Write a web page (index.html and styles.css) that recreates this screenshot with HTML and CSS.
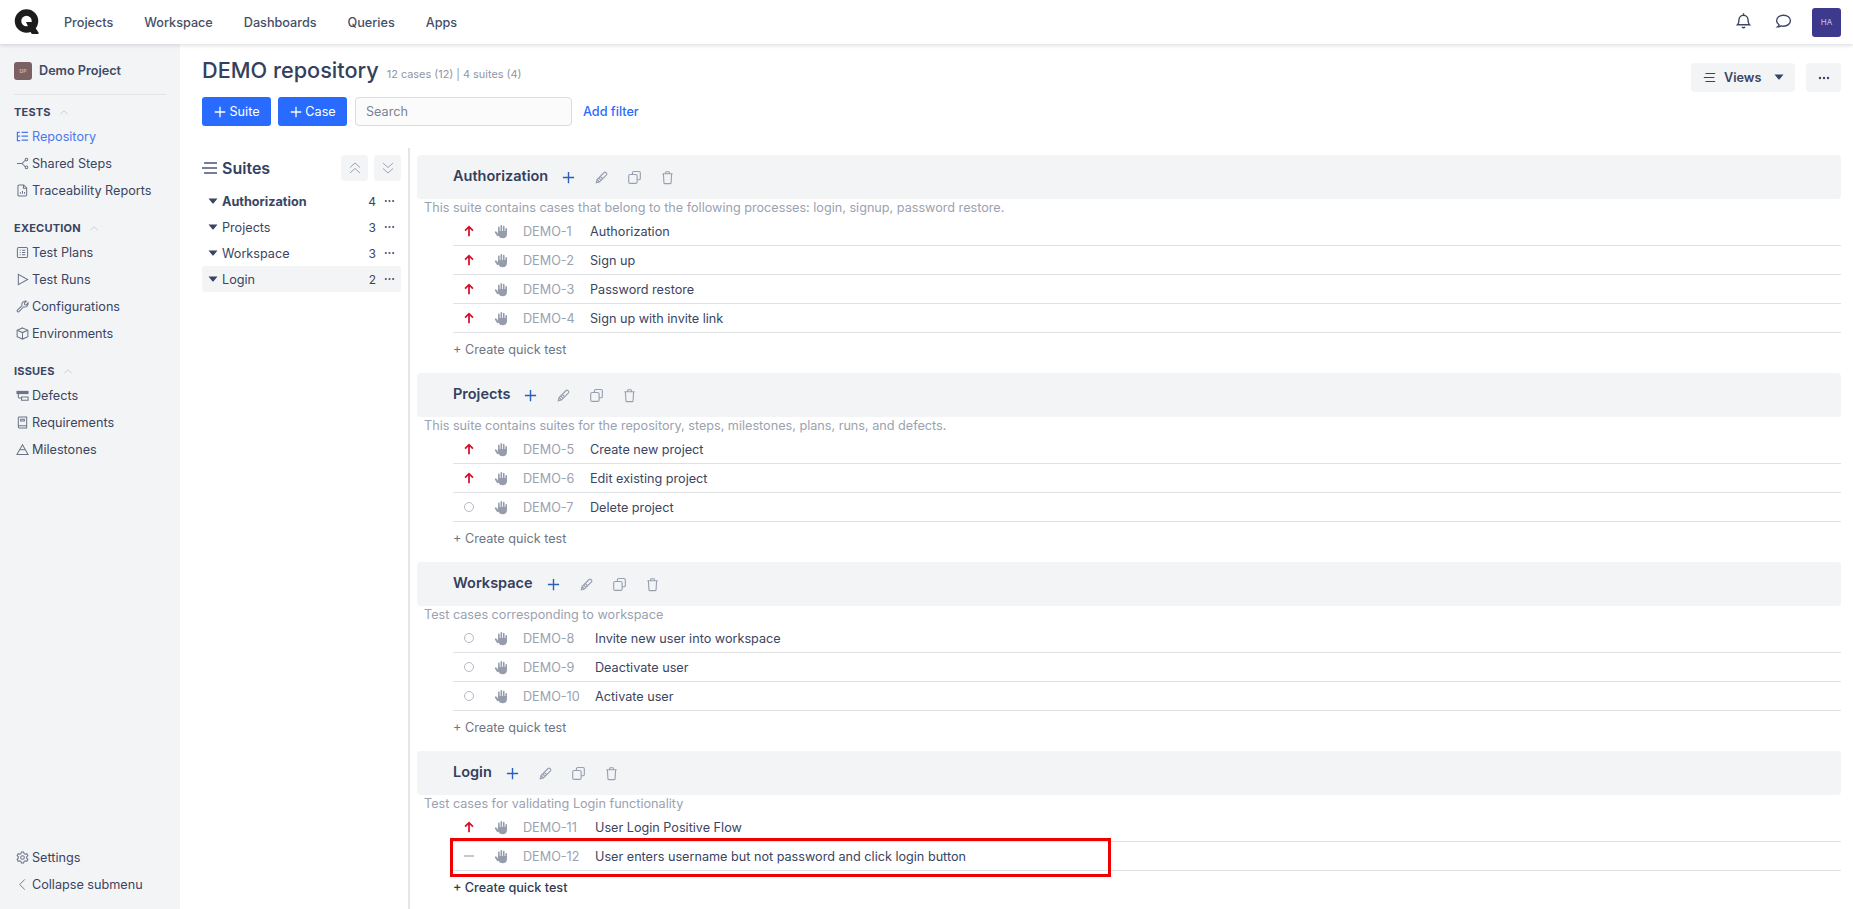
FILE: index.html
```html
<!DOCTYPE html>
<html lang="en">
<head>
    <meta charset="UTF-8">
    <title>DEMO repository</title>
    <link rel="stylesheet" href="styles.css">
</head>
<body>
    <svg class="sprites" xmlns="http://www.w3.org/2000/svg">
        <symbol id="i-hand" viewBox="0 0 16 16"><g fill="none" stroke="currentColor" stroke-linecap="round"><path stroke-width="1.700" d="M5.200 8V3.600M7.800 8V1.900M10.400 8V2.800M13 9V5.200"/><path stroke-width="2" d="M1.900 8.800 4 12"/></g><path fill="currentColor" d="M4.300 7.500h9.500v3.300c0 2.600-1.900 4.300-4.500 4.300-2.200 0-3.500-.9-4.500-2.700l-1-1.800z"/></symbol>
        <symbol id="i-up" viewBox="0 0 16 16"><path fill="none" stroke="currentColor" stroke-width="2" d="M8 14V3M3.500 7.500 8 3l4.500 4.500"/></symbol>
        <symbol id="i-plus" viewBox="0 0 16 16"><path fill="none" stroke="currentColor" stroke-width="1.500" d="M8 2v12M2 8h12"/></symbol>
        <symbol id="i-pencil" viewBox="0 0 16 16"><path fill="none" stroke="currentColor" stroke-width="1.300" d="M2.500 13.500l.8-3.300L10.800 2.700c.5-.5 1.300-.5 1.800 0l.7.7c.5.5.5 1.300 0 1.800l-7.500 7.500zM3.300 10.200l2.500 2.500M5 8.500l2.500 2.500M6.700 6.800l2.500 2.500"/></symbol>
        <symbol id="i-copy" viewBox="0 0 16 16"><g fill="none" stroke="currentColor" stroke-width="1.200"><rect x="1.800" y="4.800" width="9" height="9.500" rx="1.500"/><path d="M5.800 4.500V3c0-.8.600-1.400 1.400-1.400h5.600c.8 0 1.400.6 1.400 1.400v6c0 .8-.6 1.400-1.400 1.400h-2"/></g></symbol>
        <symbol id="i-trash" viewBox="0 0 16 16"><g fill="none" stroke="currentColor" stroke-width="1.200"><path d="M2.500 4h11M6 4V2.600c0-.4.300-.7.700-.7h2.600c.4 0 .7.300.7.700V4M3.600 4l.6 9.500c0 .6.500 1 1.100 1h5.400c.6 0 1.100-.4 1.100-1l.6-9.500"/></g></symbol>
        <symbol id="i-dots" viewBox="0 0 12 4"><circle cx="2" cy="2" r="1.200" fill="currentColor"/><circle cx="6" cy="2" r="1.200" fill="currentColor"/><circle cx="10" cy="2" r="1.200" fill="currentColor"/></symbol>
        <symbol id="i-caret" viewBox="0 0 10 6"><path fill="currentColor" d="M.5.500h9L5.600 5.200c-.3.400-.9.400-1.200 0z"/></symbol>
        <symbol id="i-chev" viewBox="0 0 12 7"><path fill="none" stroke="currentColor" stroke-width="1" d="M1.500 5.500 6 1.500l4.500 4"/></symbol>
    </svg>

    <header class="topbar">
        <svg class="logo" viewBox="0 0 26 26"><circle cx="12.500" cy="12" r="8.500" fill="none" stroke="#1c1c1c" stroke-width="6.500"/><path d="M12 13h5.500l7 10.500c.4.800 0 1.500-.8 1.500h-5c-.7 0-1.100-.2-1.500-.8z" fill="#1c1c1c"/></svg>
        <nav class="topnav">
            <a>Projects</a>
            <a>Workspace</a>
            <a>Dashboards</a>
            <a>Queries</a>
            <a>Apps</a>
        </nav>
        <div class="topbar-right">
            <svg class="top-icon" viewBox="0 0 16 16"><path fill="none" stroke="currentColor" stroke-width="1.300" d="M2.300 12c1-1 1.400-2.200 1.400-4.200C3.700 5 5.500 3 8 3s4.300 2 4.300 4.800c0 2 .4 3.200 1.400 4.200zM8 1.200V3M6.500 14.200c.8.700 2.200.7 3 0"/></svg>
            <svg class="top-icon" viewBox="0 0 16 16"><path fill="none" stroke="currentColor" stroke-width="1.300" d="M2.400 14c.8-.5 1.300-1.200 1.400-2C2.400 11 1.500 9.700 1.500 8.200 1.500 5.300 4.400 3 8 3s6.500 2.300 6.500 5.200-2.900 5.200-6.500 5.200c-.8 0-1.500-.1-2.200-.3-.9.700-2.100 1-3.400.9z"/></svg>
            <div class="avatar">HA</div>
        </div>
    </header>

    <div class="shell">
        <aside class="sidebar">
            <div class="project">
                <span class="project-badge">DP</span>
                <span>Demo Project</span>
            </div>
            <div class="side-group first">TESTS <svg class="chev"><use href="#i-chev"/></svg></div>
            <a class="side-item active">
                <svg viewBox="0 0 14 14"><path fill="none" stroke="currentColor" stroke-width="1.300" d="M1.500 2v9.500h3M1.500 6.500h3M6 2.500h7M6 6.500h7M6 11h7M1 2.500h3"/></svg>
                Repository
            </a>
            <a class="side-item">
                <svg viewBox="0 0 14 14"><g fill="none" stroke="currentColor" stroke-width="1.100"><path d="M1 7h5.500l3.500-3.500M6.500 7l3.500 3.500"/><circle cx="11.300" cy="2.800" r="1.400"/><circle cx="11.300" cy="11.200" r="1.400"/></g></svg>
                Shared Steps
            </a>
            <a class="side-item">
                <svg viewBox="0 0 14 14"><g fill="none" stroke="currentColor" stroke-width="1.100"><path d="M3.300 1h5l3.200 3.200v7.500c0 .7-.5 1.300-1.200 1.300H3.300c-.7 0-1.200-.6-1.200-1.300V2.300C2.100 1.600 2.600 1 3.300 1z"/><path d="M8 1v3.500h3.500M4.800 10.500V9M7 10.500V7.500M9.200 10.500V8.500"/></g></svg>
                Traceability Reports
            </a>

            <div class="side-group">EXECUTION <svg class="chev"><use href="#i-chev"/></svg></div>
            <a class="side-item">
                <svg viewBox="0 0 14 14"><g fill="none" stroke="currentColor" stroke-width="1.100"><rect x="1.500" y="1.500" width="11" height="11" rx="1.500"/><path d="M4 4.500h1M6.500 4.500H10M4 7h1M6.500 7H10M4 9.500h1M6.500 9.500H10"/></g></svg>
                Test Plans
            </a>
            <a class="side-item">
                <svg viewBox="0 0 14 14"><path fill="none" stroke="currentColor" stroke-width="1.100" d="M2.500 1.500v11L12.500 7z"/></svg>
                Test Runs
            </a>
            <a class="side-item">
                <svg viewBox="0 0 14 14"><path fill="none" stroke="currentColor" stroke-width="1.100" d="M1.300 11.200 6.500 6c-.6-2 .2-4.600 3.500-5 .5 0 .9 0 1.200.2L9 3.500l.3 1.500 1.500.4L13 3c.3 2.800-1.800 5-5 4.500l-5 5.200c-.9.600-2.300-.6-1.700-1.500z"/></svg>
                Configurations
            </a>
            <a class="side-item">
                <svg viewBox="0 0 14 14"><g fill="none" stroke="currentColor" stroke-width="1.100"><path d="M7 1 12.800 3.500v7L7 13 1.200 10.500v-7z"/><path d="M1.200 3.500 7 6l5.800-2.500M7 6v7"/></g></svg>
                Environments
            </a>

            <div class="side-group">ISSUES <svg class="chev"><use href="#i-chev"/></svg></div>
            <a class="side-item">
                <svg viewBox="0 0 14 14"><path fill="currentColor" d="M.5 2h13v3.500h-13z"/><path fill="none" stroke="currentColor" stroke-width="1.100" d="M2.500 5.500v3c0 .8.500 1.300 1.200 1.300H6M6 8.500h7v3.500H6z"/></svg>
                Defects
            </a>
            <a class="side-item">
                <svg viewBox="0 0 14 14"><g fill="none" stroke="currentColor" stroke-width="1.100"><path d="M2.500 11V2c0-.6.400-1 1-1h8v9.500h-8c-.6 0-1 .5-1 1.100S3 13 3.500 13h8v-2.500"/><path d="M5 3.500h4v2H5z"/></g></svg>
                Requirements
            </a>
            <a class="side-item">
                <svg viewBox="0 0 14 14"><path fill="none" stroke="currentColor" stroke-width="1.100" d="M7 2 13 12.500H1zM4.700 7.500c1.500-.8 3-.8 4.600 0"/></svg>
                Milestones
            </a>

            <div class="side-spacer"></div>
            <a class="side-item">
                <svg viewBox="0 0 14 14"><g fill="none" stroke="currentColor" stroke-width="1.100"><path d="M5.800 1h2.400l.4 1.700 1.300.7 1.700-.5 1.200 2.100-1.300 1.200v1.600l1.300 1.200-1.200 2.100-1.700-.5-1.300.7L8.200 13H5.800l-.4-1.700-1.300-.7-1.700.5-1.200-2.100 1.300-1.200V6.200L1.200 5l1.200-2.100 1.700.5 1.300-.7z"/><circle cx="7" cy="7" r="2"/></g></svg>
                Settings
            </a>
            <a class="side-item">
                <svg viewBox="0 0 14 14"><path fill="none" stroke="currentColor" stroke-width="1" d="M9.500 1.500 4 7l5.500 5.500"/></svg>
                Collapse submenu
            </a>
        </aside>

        <main class="content">
            <div class="page-head">
                <div>
                    <div class="title-line">
                        <h1>DEMO repository</h1>
                        <span class="stats">12 cases (12) | 4 suites (4)</span>
                    </div>
                    <div class="toolbar">
                        <button class="btn-primary"><svg><use href="#i-plus"/></svg>Suite</button>
                        <button class="btn-primary"><svg><use href="#i-plus"/></svg>Case</button>
                        <div class="search">Search</div>
                        <a class="add-filter">Add filter</a>
                    </div>
                </div>
                <div class="head-actions">
                    <button class="btn-soft views">
                        <svg class="lines" viewBox="0 0 16 12"><path fill="none" stroke="currentColor" stroke-width="1.300" d="M3 1h12M1 6h13M3 11h12"/></svg>
                        Views
                        <svg class="views-caret"><use href="#i-caret"/></svg>
                    </button>
                    <button class="btn-soft more"><svg><use href="#i-dots"/></svg></button>
                </div>
            </div>

            <div class="columns">
                <section class="tree">
                    <div class="tree-head">
                        <svg class="lines-big" viewBox="0 0 16 12"><path fill="none" stroke="currentColor" stroke-width="1.400" d="M2 1h13M0 6h15M2 11h13"/></svg>
                        <h2>Suites</h2>
                        <button class="tree-btn"><svg viewBox="0 0 12 12"><path fill="none" stroke="currentColor" stroke-width="1" d="M1 5.500 6 1l5 4.500M1 11l5-4.500 5 4.500"/></svg></button>
                        <button class="tree-btn"><svg viewBox="0 0 12 12"><path fill="none" stroke="currentColor" stroke-width="1" d="M1 1l5 4.500L11 1M1 6.500 6 11l5-4.500"/></svg></button>
                    </div>
                    <div class="tree-row strong"><svg class="tree-caret"><use href="#i-caret"/></svg><span>Authorization</span><b>4</b><svg class="tree-dots"><use href="#i-dots"/></svg></div>
                    <div class="tree-row"><svg class="tree-caret"><use href="#i-caret"/></svg><span>Projects</span><b>3</b><svg class="tree-dots"><use href="#i-dots"/></svg></div>
                    <div class="tree-row"><svg class="tree-caret"><use href="#i-caret"/></svg><span>Workspace</span><b>3</b><svg class="tree-dots"><use href="#i-dots"/></svg></div>
                    <div class="tree-row current"><svg class="tree-caret"><use href="#i-caret"/></svg><span>Login</span><b>2</b><svg class="tree-dots"><use href="#i-dots"/></svg></div>
                </section>

                <section class="suites">
                    <div class="suite">
                        <div class="suite-head">
                            <h3>Authorization</h3>
                            <svg class="act plus"><use href="#i-plus"/></svg>
                            <svg class="act"><use href="#i-pencil"/></svg>
                            <svg class="act"><use href="#i-copy"/></svg>
                            <svg class="act"><use href="#i-trash"/></svg>
                        </div>
                        <p class="suite-desc">This suite contains cases that belong to the following processes: login, signup, password restore.</p>
                        <div class="case"><svg class="prio"><use href="#i-up"/></svg><svg class="hand"><use href="#i-hand"/></svg><span class="case-id">DEMO-1</span><span>Authorization</span></div>
                        <div class="case"><svg class="prio"><use href="#i-up"/></svg><svg class="hand"><use href="#i-hand"/></svg><span class="case-id">DEMO-2</span><span>Sign up</span></div>
                        <div class="case"><svg class="prio"><use href="#i-up"/></svg><svg class="hand"><use href="#i-hand"/></svg><span class="case-id">DEMO-3</span><span>Password restore</span></div>
                        <div class="case"><svg class="prio"><use href="#i-up"/></svg><svg class="hand"><use href="#i-hand"/></svg><span class="case-id">DEMO-4</span><span>Sign up with invite link</span></div>
                        <a class="quick">+ Create quick test</a>
                    </div>

                    <div class="suite">
                        <div class="suite-head">
                            <h3>Projects</h3>
                            <svg class="act plus"><use href="#i-plus"/></svg>
                            <svg class="act"><use href="#i-pencil"/></svg>
                            <svg class="act"><use href="#i-copy"/></svg>
                            <svg class="act"><use href="#i-trash"/></svg>
                        </div>
                        <p class="suite-desc">This suite contains suites for the repository, steps, milestones, plans, runs, and defects.</p>
                        <div class="case"><svg class="prio"><use href="#i-up"/></svg><svg class="hand"><use href="#i-hand"/></svg><span class="case-id">DEMO-5</span><span>Create new project</span></div>
                        <div class="case"><svg class="prio"><use href="#i-up"/></svg><svg class="hand"><use href="#i-hand"/></svg><span class="case-id">DEMO-6</span><span>Edit existing project</span></div>
                        <div class="case"><span class="prio ring"></span><svg class="hand"><use href="#i-hand"/></svg><span class="case-id">DEMO-7</span><span>Delete project</span></div>
                        <a class="quick">+ Create quick test</a>
                    </div>

                    <div class="suite wide-ids">
                        <div class="suite-head">
                            <h3>Workspace</h3>
                            <svg class="act plus"><use href="#i-plus"/></svg>
                            <svg class="act"><use href="#i-pencil"/></svg>
                            <svg class="act"><use href="#i-copy"/></svg>
                            <svg class="act"><use href="#i-trash"/></svg>
                        </div>
                        <p class="suite-desc">Test cases corresponding to workspace</p>
                        <div class="case"><span class="prio ring"></span><svg class="hand"><use href="#i-hand"/></svg><span class="case-id">DEMO-8</span><span>Invite new user into workspace</span></div>
                        <div class="case"><span class="prio ring"></span><svg class="hand"><use href="#i-hand"/></svg><span class="case-id">DEMO-9</span><span>Deactivate user</span></div>
                        <div class="case"><span class="prio ring"></span><svg class="hand"><use href="#i-hand"/></svg><span class="case-id">DEMO-10</span><span>Activate user</span></div>
                        <a class="quick">+ Create quick test</a>
                    </div>

                    <div class="suite wide-ids">
                        <div class="suite-head">
                            <h3>Login</h3>
                            <svg class="act plus"><use href="#i-plus"/></svg>
                            <svg class="act"><use href="#i-pencil"/></svg>
                            <svg class="act"><use href="#i-copy"/></svg>
                            <svg class="act"><use href="#i-trash"/></svg>
                        </div>
                        <p class="suite-desc">Test cases for validating Login functionality</p>
                        <div class="case"><svg class="prio"><use href="#i-up"/></svg><svg class="hand"><use href="#i-hand"/></svg><span class="case-id">DEMO-11</span><span>User Login Positive Flow</span></div>
                        <div class="case"><span class="prio dash"></span><svg class="hand"><use href="#i-hand"/></svg><span class="case-id">DEMO-12</span><span>User enters username but not password and click login button</span></div>
                        <a class="quick dark">+ Create quick test</a>
                    </div>
                </section>
            </div>
        </main>
    </div>

    <div class="highlight"></div>
</body>
</html>
```

FILE: styles.css
```css
* {
    box-sizing: border-box;
}
html, body {
    height: 100%;
}
body {
    margin: 0;
    font-family: Inter, "Noto Sans", sans-serif;
    font-size: 12.65px;
    color: #2f3b57;
    background-color: white;
    overflow: hidden;
}
svg {
    display: block;
    flex-shrink: 0;
}
button {
    font-family: inherit;
    border: none;
    cursor: pointer;
}
.sprites {
    display: none;
}
.topbar {
    position: relative;
    z-index: 2;
    height: 44px;
    display: flex;
    align-items: center;
    padding: 0 12px 0 14px;
    background-color: white;
    box-shadow: 0 1px 4px rgba(30, 40, 60, 0.18);
}
.logo {
    width: 26px;
    height: 26px;
}
.topnav {
    display: flex;
    gap: 31px;
    margin-left: 24px;
    font-weight: 500;
    color: #454f69;
}
.topbar-right {
    margin-left: auto;
    display: flex;
    align-items: center;
}
.top-icon {
    width: 17px;
    height: 17px;
    margin-right: 20px;
    margin-bottom: 4px;
    color: #3b4663;
}
.top-icon + .top-icon {
    margin-left: 3px;
}
.avatar {
    width: 29px;
    height: 29px;
    border-radius: 3px;
    background-color: #3d3a8e;
    color: #c9c9e6;
    font-size: 8px;
    display: flex;
    align-items: center;
    justify-content: center;
}
.shell {
    display: flex;
    height: calc(100vh - 44px);
}
.sidebar {
    width: 180px;
    flex-shrink: 0;
    display: flex;
    flex-direction: column;
    padding: 9px 14px 11px;
    background-color: #f3f4f6;
}
.project {
    display: flex;
    align-items: center;
    gap: 7px;
    height: 42px;
    padding-bottom: 6px;
    border-bottom: 1px solid #e2e4e9;
    font-weight: 600;
    color: #414b66;
}
.project-badge {
    width: 18px;
    height: 18px;
    border-radius: 3px;
    background-color: #7b6164;
    color: #c9b9ba;
    font-size: 5px;
    display: flex;
    align-items: center;
    justify-content: center;
}
.side-group {
    display: flex;
    align-items: center;
    gap: 8px;
    height: 18px;
    margin-top: 15px;
    margin-bottom: 2px;
    font-size: 11px;
    font-weight: 700;
    color: #3a4562;
    letter-spacing: 0.2px;
}
.side-group.first {
    margin-top: 8px;
}
.chev {
    width: 10px;
    height: 7px;
    color: #c3c8d2;
}
.side-item {
    display: flex;
    align-items: center;
    gap: 3px;
    height: 27px;
    color: #3a4562;
}
.side-item svg {
    width: 13px;
    height: 13px;
    margin-left: 2px;
    color: #6b7488;
}
.side-item.active,
.side-item.active svg {
    color: #4a78ef;
}
.side-spacer {
    flex: 1;
}
.content {
    flex: 1;
    min-width: 0;
    padding: 9px 12px 0 22px;
    display: flex;
    flex-direction: column;
}
.page-head {
    display: flex;
    justify-content: space-between;
    align-items: flex-start;
}
.title-line {
    display: flex;
    align-items: baseline;
    gap: 8px;
    height: 36px;
    padding-top: 4px;
}
h1 {
    margin: 0;
    font-size: 21.7px;
    font-weight: 500;
    color: #33405e;
}
.stats {
    font-size: 10.9px;
    color: #8e96a6;
}
.toolbar {
    display: flex;
    align-items: center;
    gap: 7px;
    margin-top: 8px;
}
.btn-primary {
    width: 69px;
    height: 29px;
    display: flex;
    align-items: center;
    justify-content: center;
    gap: 2px;
    border-radius: 3px;
    background-color: #2a6bff;
    color: white;
    font-size: 12.65px;
}
.btn-primary svg {
    width: 14px;
    height: 14px;
}
.search {
    width: 217px;
    height: 29px;
    margin-left: 1px;
    padding: 0 10px;
    display: flex;
    align-items: center;
    border: 1px solid #d9dce1;
    border-radius: 4px;
    background-color: #fbfbfc;
    color: #7b8394;
}
.add-filter {
    margin-left: 4px;
    color: #2a6bff;
    font-weight: 500;
}
.head-actions {
    display: flex;
    gap: 11px;
    margin-top: 10px;
}
.btn-soft {
    height: 29px;
    display: flex;
    align-items: center;
    border-radius: 4px;
    background-color: #f3f4f6;
    color: #3a4562;
}
.views {
    width: 104px;
    padding: 0 12px 1px;
    gap: 8px;
    font-size: 12.65px;
    font-weight: 600;
}
.lines {
    width: 13px;
    height: 11px;
}
.views-caret {
    width: 10px;
    height: 6px;
    margin-left: 5px;
}
.more {
    width: 35px;
    justify-content: center;
}
.more svg {
    width: 12px;
    height: 4px;
}
.columns {
    display: flex;
    flex: 1;
    min-height: 0;
    margin-top: 22px;
}
.tree {
    width: 199px;
    flex-shrink: 0;
    padding-top: 7px;
}
.tree-head {
    display: flex;
    align-items: center;
    height: 26px;
    margin-bottom: 7px;
}
.lines-big {
    width: 16px;
    height: 12px;
    margin-right: 4px;
    color: #4b5671;
}
h2 {
    margin: 0;
    flex: 1;
    font-size: 16px;
    font-weight: 600;
    color: #33405e;
}
.tree-btn {
    width: 27px;
    height: 26px;
    margin-left: 6px;
    padding: 0;
    display: flex;
    align-items: center;
    justify-content: center;
    border-radius: 4px;
    background-color: #f3f4f6;
    color: #9aa2b1;
}
.tree-btn svg {
    width: 12px;
    height: 12px;
}
.tree-row {
    display: flex;
    align-items: center;
    height: 26px;
    padding: 0 6px;
    border-radius: 3px;
    color: #3a4562;
}
.tree-row.strong {
    font-weight: 700;
}
.tree-row.current {
    background-color: #f3f4f6;
}
.tree-row span {
    flex: 1;
    margin-left: 4px;
}
.tree-row b {
    font-weight: 400;
    font-size: 12px;
    margin-right: 8px;
}
.tree-caret {
    width: 10px;
    height: 6px;
}
.tree-dots {
    width: 11px;
    height: 4px;
    color: #4b5671;
}
.suites {
    flex: 1;
    min-width: 0;
    margin-left: 7px;
    padding: 7px 0 0 7px;
    border-left: 2px solid #e3e5e9;
}
.suite {
    padding-bottom: 8px;
}
.suite-head {
    height: 44px;
    display: flex;
    align-items: center;
    padding-left: 36px;
    border-radius: 4px;
    background-color: #f3f4f6;
}
h3 {
    margin: 0 8px 3px 0;
    font-size: 14.5px;
    font-weight: 600;
    color: #33405e;
}
.act {
    width: 15px;
    height: 15px;
    margin-left: 18px;
    color: #98a0af;
}
.act.plus {
    margin-left: 5px;
    color: #2c5fb8;
}
.suite-desc {
    margin: 0 0 0 7px;
    height: 18px;
    line-height: 17px;
    color: #9aa2b1;
}
.case {
    display: flex;
    align-items: center;
    height: 29px;
    margin-left: 36px;
    border-bottom: 1px solid #dfe1e5;
    color: #3a4562;
}
.prio {
    width: 14px;
    height: 14px;
    margin-left: 9px;
    color: #d4122e;
}
.ring {
    display: flex;
    align-items: center;
    justify-content: center;
}
.ring::before {
    content: "";
    width: 8px;
    height: 8px;
    border: 1.5px solid #b4b9c3;
    border-radius: 50%;
}
.dash {
    display: flex;
    align-items: center;
    justify-content: center;
}
.dash::before {
    content: "";
    width: 10px;
    height: 1.5px;
    background-color: #c4c8d0;
}
.hand {
    width: 15px;
    height: 15px;
    margin-left: 18px;
    color: #959cab;
}
.case-id {
    width: 67px;
    margin-left: 14px;
    color: #9aa2b1;
}
.wide-ids .case-id {
    width: 72px;
}
.quick {
    display: flex;
    align-items: center;
    height: 32px;
    margin-left: 36px;
    color: #6e7584;
}
.quick.dark {
    color: #333b52;
    font-weight: 500;
}
.highlight {
    position: absolute;
    left: 450px;
    top: 838px;
    width: 661px;
    height: 39px;
    border: 3px solid #f00000;
}
```
